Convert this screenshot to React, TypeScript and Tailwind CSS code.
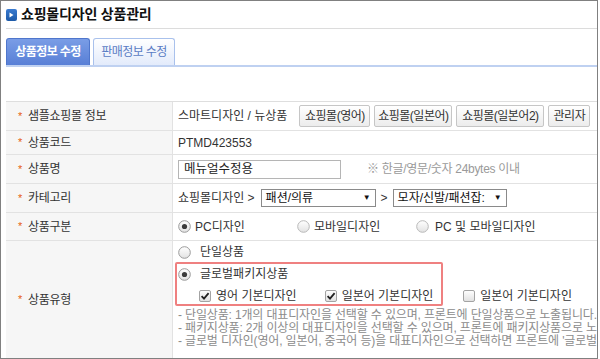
import React from 'react';

const FONT = { fontFamily: '"Liberation Sans", "Noto Sans CJK KR", sans-serif' };

const Radio: React.FC<{ checked?: boolean; dim?: boolean }> = ({ checked, dim }) => (
  <svg width="13" height="13" viewBox="0 0 13 13" className="shrink-0">
    <defs>
      <linearGradient id="rg" x1="0" y1="0" x2="0" y2="1">
        <stop offset="0" stopColor="#ffffff" />
        <stop offset="1" stopColor="#e2e2e2" />
      </linearGradient>
    </defs>
    <circle cx="6.5" cy="6.5" r="5.8" fill="url(#rg)" stroke={dim ? '#b9b9b9' : '#9a9a9a'} strokeWidth="1" />
    {checked && <circle cx="6.5" cy="6.5" r="2.6" fill="#3c3c3c" />}
  </svg>
);

const Check: React.FC<{ checked?: boolean }> = ({ checked }) => (
  <svg width="12" height="12" viewBox="0 0 12 12" className="shrink-0">
    <defs>
      <linearGradient id="cg" x1="0" y1="0" x2="0" y2="1">
        <stop offset="0" stopColor="#ffffff" />
        <stop offset="1" stopColor="#e0e0e0" />
      </linearGradient>
    </defs>
    <rect x="0.5" y="0.5" width="11" height="11" rx="1.5" fill="url(#cg)" stroke="#a3a3a3" />
    {checked && <path d="M2.6 6.2 L5 8.6 L9.6 3.2" fill="none" stroke="#222" strokeWidth="1.8" />}
  </svg>
);

const Label: React.FC<{ children: React.ReactNode }> = ({ children }) => (
  <div className="w-[167px] shrink-0 bg-[#f6f6f6] border-r border-[#e2e2e2] flex items-center pl-[12px] tracking-[-0.3px]">
    <span className="text-[#e6600e] text-[11px] w-[10px] leading-none">*</span>
    <span className="text-[#333]">{children}</span>
  </div>
);

const Btn: React.FC<{ w: string; children: React.ReactNode }> = ({ w, children }) => (
  <span className={`${w} h-[22px] flex items-center justify-center border border-[#c6c6c6] rounded-[2px] bg-gradient-to-b from-white to-[#ececec] text-[#333] tracking-[-0.5px]`}>
    {children}
  </span>
);

export default function App() {
  return (
    <div className="w-[600px] h-[359px] bg-white overflow-hidden text-[12px] text-[#333]" style={FONT}>
      <div className="w-[598px] h-[359px] border border-[#808080] overflow-hidden pl-[5px]">
        {/* Title */}
        <div className="h-[28px] border-b border-[#dcdcdc] flex items-center gap-[4px]">
          <span className="w-[11px] h-[12px] rounded-[2px] bg-gradient-to-b from-[#3a7bd0] to-[#1d5aa8] flex items-center justify-center">
            <svg width="5" height="6" viewBox="0 0 5 6"><path d="M0.5 0.5 L4.5 3 L0.5 5.5 Z" fill="#fff" /></svg>
          </span>
          <span className="text-[14px] font-bold text-[#111] tracking-[-0.2px]">쇼핑몰디자인 상품관리</span>
        </div>

        {/* Tabs */}
        <div className="mt-[9px] h-[29px] border-b-2 border-[#bfd1f1] flex items-end gap-[3px]">
          <div className="w-[84px] h-[27px] rounded-t-[3px] border border-b-0 border-[#4f76cc] bg-gradient-to-b from-[#7a9de6] to-[#587fd6] flex items-center justify-center text-white font-bold tracking-[-0.6px]">
            상품정보 수정
          </div>
          <div className="w-[82px] h-[27px] rounded-t-[3px] border border-b-0 border-[#a9c1ec] bg-gradient-to-b from-white to-[#e3ebfb] flex items-center justify-center text-[#5a7cc4] tracking-[-0.6px]">
            판매정보 수정
          </div>
        </div>

        {/* Table */}
        <div className="mt-[34px] border-t border-[#dedede]">
          <div className="h-[29px] flex border-b border-[#e2e2e2]">
            <Label>샘플쇼핑몰 정보</Label>
            <div className="flex items-center pl-[5px] whitespace-nowrap">
              <span className="mr-[12px]">스마트디자인 / 뉴상품</span>
              <div className="flex gap-[4px]">
                <Btn w="w-[71px]">쇼핑몰(영어)</Btn>
                <Btn w="w-[78px]">쇼핑몰(일본어)</Btn>
                <Btn w="w-[88px]">쇼핑몰(일본어2)</Btn>
                <Btn w="w-[42px]">관리자</Btn>
              </div>
            </div>
          </div>

          <div className="h-[24px] flex border-b border-[#e2e2e2]">
            <Label>상품코드</Label>
            <div className="flex items-center pl-[5px]">PTMD423553</div>
          </div>

          <div className="h-[29px] flex border-b border-[#e2e2e2]">
            <Label>상품명</Label>
            <div className="flex items-center pl-[5px] whitespace-nowrap">
              <div className="w-[163px] h-[19px] border border-[#b5b5b5] flex items-center pl-[5px] text-[#222] text-[12.5px]">메뉴얼수정용</div>
              <span className="ml-[26px] text-[#9a9a9a] tracking-[-0.3px]">※ 한글/영문/숫자 24bytes 이내</span>
            </div>
          </div>

          <div className="h-[29px] flex border-b border-[#e2e2e2]">
            <Label>카테고리</Label>
            <div className="flex items-center pl-[5px] whitespace-nowrap">
              <span>쇼핑몰디자인 &gt;</span>
              <div className="ml-[6px] w-[115px] h-[18px] border border-[#8a8a8a] flex items-center justify-between pl-[4px] pr-[4px] text-[#111]">
                <span>패션/의류</span>
                <span className="text-[8px]">▼</span>
              </div>
              <span className="mx-[5px]">&gt;</span>
              <div className="w-[114px] h-[18px] border border-[#8a8a8a] flex items-center justify-between pl-[4px] pr-[4px] text-[#111]">
                <span>모자/신발/패션잡:</span>
                <span className="text-[8px]">▼</span>
              </div>
            </div>
          </div>

          <div className="h-[28px] flex border-b border-[#e2e2e2]">
            <Label>상품구분</Label>
            <div className="flex items-center pl-[5px] whitespace-nowrap">
              <label className="w-[119px] flex items-center gap-[4px]"><Radio checked />PC디자인</label>
              <label className="w-[119px] flex items-center gap-[4px]"><Radio dim />모바일디자인</label>
              <label className="flex items-center gap-[6px]"><Radio dim />PC 및 모바일디자인</label>
            </div>
          </div>

          <div className="h-[117px] flex">
            <Label>상품유형</Label>
            <div className="relative flex-1 pl-[5px] whitespace-nowrap">
              <div className="h-[22px] flex items-center gap-[9px]"><Radio />단일상품</div>
              <div className="h-[22px] flex items-center gap-[9px]"><Radio checked />글로벌패키지상품</div>
              <div className="h-[22px] flex items-center pl-[21px]">
                <label className="flex items-center gap-[5px] mr-[28px]"><Check checked />영어 기본디자인</label>
                <label className="flex items-center gap-[5px] mr-[30px]"><Check checked />일본어 기본디자인</label>
                <label className="flex items-center gap-[5px]"><Check />일본어 기본디자인</label>
              </div>
              <div className="mt-[2px] leading-[13px] text-[#8c8c8c] tracking-[-0.15px]">
                <p>- 단일상품: 1개의 대표디자인을 선택할 수 있으며, 프론트에 단일상품으로 노출됩니다.</p>
                <p>- 패키지상품: 2개 이상의 대표디자인을 선택할 수 있으며, 프론트에 패키지상품으로 노출됩니다.</p>
                <p>- 글로벌 디자인(영어, 일본어, 중국어 등)을 대표디자인으로 선택하면 프론트에 '글로벌 패키지상품'으로 노출됩니다.</p>
              </div>
              <div className="absolute left-[2px] top-[21px] w-[268px] h-[44px] border-2 border-[#ef8080] rounded-[2px] pointer-events-none" />
            </div>
          </div>
        </div>
      </div>
    </div>
  );
}
